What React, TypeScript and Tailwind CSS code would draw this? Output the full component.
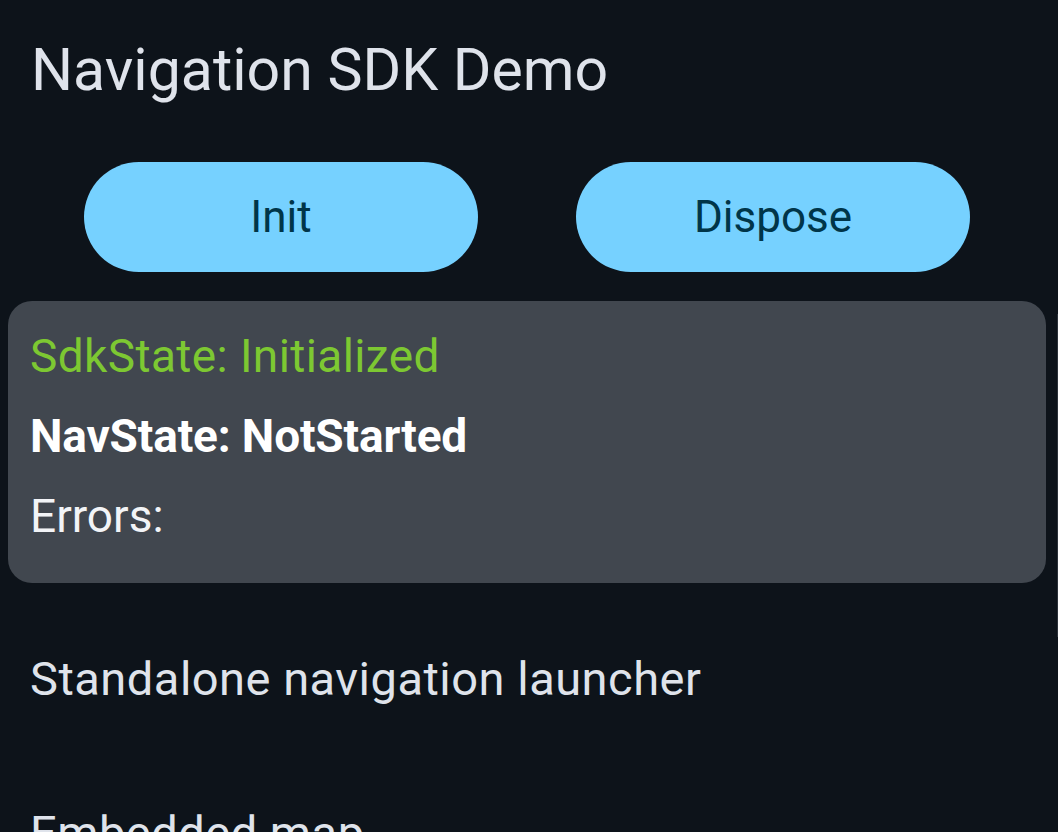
import React from "react";

const font = { fontFamily: "Roboto, 'Noto Sans', sans-serif" };

const PillButton: React.FC<{ label: string }> = ({ label }) => {
  return (
    <button className="w-[394px] h-[110px] rounded-full bg-[#76d1ff] text-[#003549] text-[44px] leading-[110px] flex items-center justify-center">
      {label}
    </button>
  );
};

const ListRow: React.FC<{ label: string }> = ({ label }) => {
  return (
    <div className="h-[154px] flex items-center pl-[30px] text-[47px] tracking-[0.5px] text-[#dfe3eb]">
      {label}
    </div>
  );
};

export default function App() {
  return (
    <div
      className="relative w-[1058px] h-[832px] overflow-hidden bg-[#0d131a]"
      style={font}
    >
      <h1 className="pl-[31px] pt-[34px] text-[59px] leading-[72px] font-normal text-[#dfe3eb]">
        Navigation SDK Demo
      </h1>

      <div className="flex gap-[98px] pl-[84px] mt-[56px]">
        <PillButton label="Init" />
        <PillButton label="Dispose" />
      </div>

      <div className="ml-[8px] mt-[29px] w-[1038px] h-[282px] rounded-[24px] bg-[#41474f] pt-[15px] px-[22px] text-[46px] leading-[80px]">
        <p className="text-[#7dc832] tracking-[0.4px]">SdkState: Initialized</p>
        <p className="font-bold text-[#ffffff] tracking-[-0.15px]">NavState: NotStarted</p>
        <p className="text-[#f2f4f7]">Errors:</p>
      </div>

      <div className="mt-[19px]">
        <ListRow label="Standalone navigation launcher" />
        <ListRow label="Embedded map" />
      </div>

      <div className="absolute right-0 top-[314px] w-[1px] h-[323px] bg-[#2c323a]" />
    </div>
  );
}
